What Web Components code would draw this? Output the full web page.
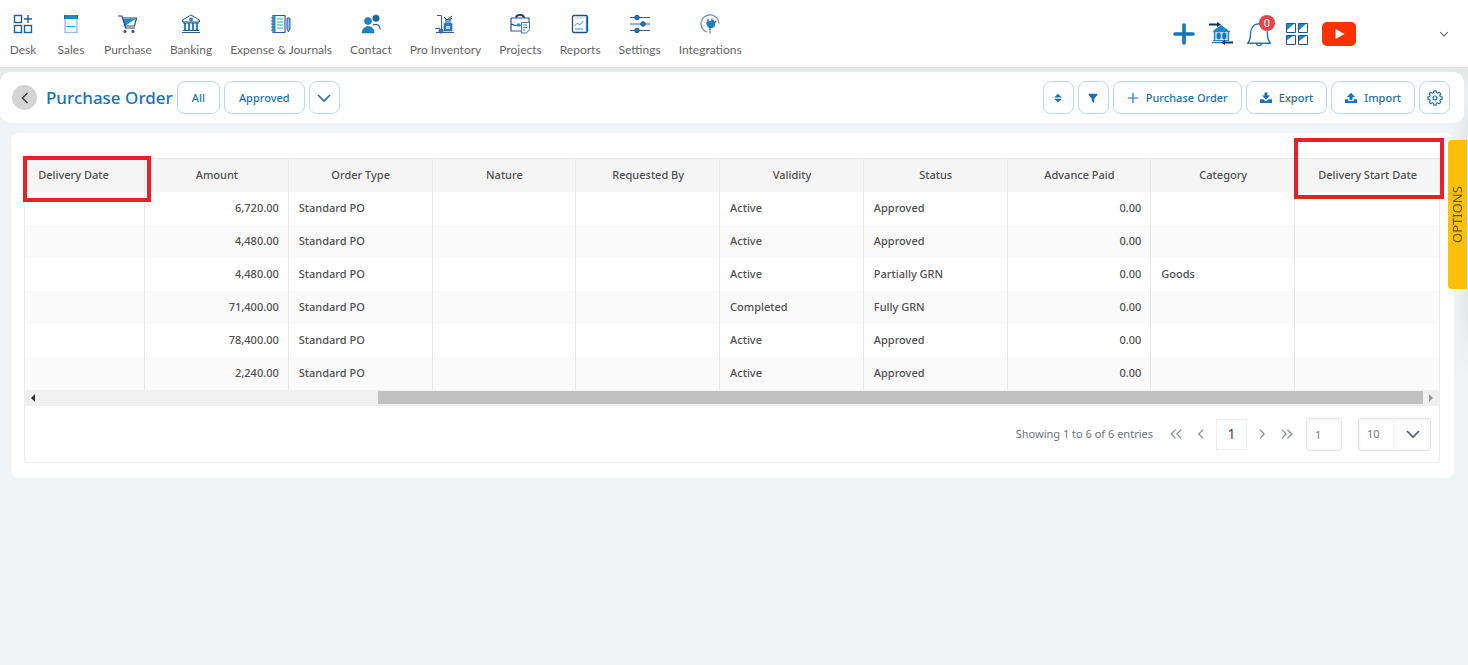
<!DOCTYPE html>
<html lang="en">
<head>
<meta charset="utf-8">
<title>Purchase Order</title>
<style>
html { min-height: 100%; background: #f0f4f7; }
body { margin: 0; font-family: "Noto Sans", "Open Sans", sans-serif; font-size: 11px; line-height: 16px; color: #505050; }
</style>
</head>
<body>
<po-app></po-app>
<script>
const ICONS = {
desk: `<g fill="none" stroke="#1f5d96" stroke-width="1.4"><rect x="1.5" y="1.5" width="7" height="7"/><rect x="1.5" y="11.5" width="7" height="7"/><rect x="11.5" y="11.5" width="7" height="7"/><path d="M15 1v8M11 5h8"/></g>`,
sales: `<path d="M4 3h12v16l-2-1-2 1-2-1-2 1-2-1-2 1z" fill="#f7fbff" stroke="#8aa3cc"/><path d="M3 1h14v4H3z" fill="#1c86c8"/><path d="M3.500 1v4M16.500 1v4" stroke="#2f5d9b"/><path d="M5 12.500h9" stroke="#2f9fdd"/><path d="M6 10h3" stroke="#b5dcf3"/>`,
purchase: `<path d="M18 4l-2 8H14L5 11 4 5z" fill="#fff"/><path d="M18 4.500L7 12 5 5z" fill="#1c8ed1"/><path d="M0 2h4l3.500 12H17M5 4h13.500l-2 8H7" fill="none" stroke="#2b4a80" stroke-width="1.200"/><circle cx="7" cy="17.500" r="1.500" fill="#23518f"/><circle cx="15" cy="17.500" r="1.500" fill="#23518f"/>`,
bank: `<path d="M10 1l8.500 5v2h-17V6z" fill="#fff" stroke="#27588f"/><circle cx="10" cy="5.500" r="2" fill="#1c8ed1"/><path d="M4 9v7M8 9v7M12 9v7M16 9v7" stroke="#2a86c6" stroke-width="2"/><path d="M2 9h16M2 16.500h16M1 18.500h18" stroke="#27588f"/>`,
journal: `<path d="M2 1.500h12v17H2z" fill="#fff" stroke="#2f5d9b" stroke-width="1.200"/><path d="M3.500 2v16" stroke="#1c8ed1" stroke-width="2"/><path d="M0 4h3M0 7h3M0 10h3M0 13h3M0 16h3" stroke="#2f5d9b"/><path d="M6 5h6M6 8h6M6 11h6M6 14h6" stroke="#36a2de"/><path d="M16 4h3v11l-1.500 3-1.500-3z" fill="#8fb9df" stroke="#2f5d9b"/>`,
contact: `<g fill="#1786c8" stroke="#1b5f9a" stroke-width=".5"><circle cx="7" cy="7" r="3.500"/><circle cx="15" cy="4.200" r="3.300" fill="#176aa5"/><path d="M1 19c0-8 12-9 12 0z"/></g><path d="M12 11c4-1.800 7 .5 7.300 4.500" fill="none" stroke="#2f5d9b" stroke-width="1.200"/>`,
inventory: `<path d="M2 1.500h4.500V17M1 18.500h18M0 14.500h5M11 18.500h8" fill="none" stroke="#3b5d94"/><path d="M9 9.500c0-1 8-1 8 0v7.500H9z" fill="#2c80c0" stroke="#27588f" stroke-width=".6"/><path d="M10 4.500l2 1 2-1 2 1v3h-6z" fill="#7d9cca"/><path d="M11 12h4v3h-4z" fill="#b7dbf2"/><path d="M9 3l3 3 5-4M14 6l3-2" fill="none" stroke="#23518f"/><circle cx="6" cy="17" r="2" fill="#2c80c0" stroke="#264e88"/>`,
projects: `<path d="M6 4c0-4 8-4 8 0" fill="none" stroke="#23406f" stroke-width="2"/><path d="M1 4h18v5M1 4v13h10M1 10c4 2 6 2 10 1" fill="none" stroke="#27588f" stroke-width="1.200"/><path d="M7 9.500h3v3H7z" fill="#1c8ed1"/><path d="M11.500 8.500h8v7l-3 3.500h-5z" fill="#f5faff" stroke="#4a76b2"/><path d="M13 11h4M13 13.500h4M13 16h2" stroke="#4b8fcb"/>`,
reports: `<rect x="2.500" y="1.500" width="15" height="17" rx="1.500" fill="#fff" stroke="#234b82" stroke-width="1.300"/><path d="M16.500 2.500v15" stroke="#1c8ed1" stroke-width="1.300"/><path d="M4.500 12l3-3 2 2 4-4M5 15h8" fill="none" stroke="#2492d4"/><path d="M5 4h7" stroke="#b2cfe8"/>`,
settings: `<path d="M0 3.500h20M0 10h20M0 16.500h20" stroke="#44618f" stroke-width="1.200"/><g fill="#1b7bba" stroke="#1d5894"><circle cx="7" cy="3.500" r="2.300"/><circle cx="13" cy="10" r="2.300"/><circle cx="7" cy="16.500" r="2.300"/></g>`,
integrations: `<path d="M7 18.300A9 9 0 1 1 19 9.500M10 19.500v-4" fill="none" stroke="#7189ae" stroke-width="1.200"/><path d="M6 8l8-2 1 3c.5 3-1 5-4 5s-4-1.500-4.500-4z" fill="#1c7fc1"/><path d="M8 8V5M12 7V4.500M10 13v3M14 9l2-2" stroke="#285d9b" stroke-width="1.200"/>`,
plus: `<path d="M12 3v18M3 12h18" stroke="#1177b8" stroke-width="3.600" stroke-linecap="round"/>`,
transfer: `<path d="M5 8l7-5 7 5v1H5z" fill="#1c86c8"/><path d="M4 9.500h17M3 20.500h10" stroke="#1c86c8" stroke-width="1.500"/><path d="M5 10.500h15v7H5z" fill="#a9d6ef"/><path d="M5.500 10v8M19.500 10v8" stroke="#2a86c6" stroke-width="1.400"/><ellipse cx="9.700" cy="14" rx="2" ry="3.400" fill="#1b75b7"/><ellipse cx="15.200" cy="14" rx="2" ry="3.400" fill="#1b75b7"/><path d="M4 18.500h16" stroke="#2a86c6"/><path d="M0 2.500h9M15 20.500h9" stroke="#102f68" stroke-width="2"/><path d="M8 0l4 2.500L8 5zM16 18l-4 2.500 4 2.500z" fill="#102f68"/>`,
bell: `<path d="M1.500 20.500h21c-2-2.500-2.700-5-2.700-9C19.800 6 16.500 2.500 12 2.500S4.200 6 4.200 11.500c0 4-.7 6.500-2.700 9z" fill="#fff" stroke="#1c79b8" stroke-width="1.300" stroke-linejoin="round"/><path d="M9.500 20.500c.5 3 4.500 3 5 0" fill="none" stroke="#1c79b8" stroke-width="1.300"/>`,
grid: `<path d="M1 1h10v10H1zM13 1h10v10H13zM1 13h10v10H1zM13 13h10v10H13z" fill="#fff"/><path d="M1.500 1.500h8l-8 7zM13.500 1.500h8l-8 7zM1.500 13.500h7l-7 5zM13.500 13.500h8l-8 6z" fill="#1c8bcc"/><path d="M1.500 1.500h9v9h-9zM13.500 1.500h9v9h-9zM1.500 13.500h9v9h-9zM13.500 13.500h9v9h-9z" fill="none" stroke="#2b4f87" stroke-width="1"/>`,
youtube: `<rect width="34" height="24" rx="5" fill="#fe3103"/><path d="M13.500 7v10l9-5z" fill="#fff"/>`,
chev: `<path d="M2 5l6 6 6-6" fill="none" stroke="currentColor" stroke-width="1.700"/>`,
left: `<path d="M10.500 3L5.500 8l5 5" fill="none" stroke="currentColor" stroke-width="1.500"/>`,
right: `<path d="M5.500 3l5 5-5 5" fill="none" stroke="currentColor" stroke-width="1.500"/>`,
first: `<path d="M7.500 3l-5 5 5 5M14 3L9 8l5 5" fill="none" stroke="currentColor" stroke-width="1.500"/>`,
last: `<path d="M2 3l5 5-5 5M8.500 3l5 5-5 5" fill="none" stroke="currentColor" stroke-width="1.500"/>`,
sort: `<path d="M2 7l6-6 6 6zM2 9h12l-6 6z" fill="currentColor"/>`,
filter: `<path d="M1 1h14v2L10 9v7l-4-3V9L1 3z" fill="currentColor"/>`,
add: `<path d="M8 1v14M1 8h14" stroke="currentColor" stroke-width="1.500"/>`,
export: `<path d="M6 .5h4v4h3.500L8 10 2.500 4.500H6zM0 9.500h4.500l2 2h3l2-2H16v5H0z" fill="currentColor"/>`,
import: `<path d="M6 10.500h4v-4h3.500L8 1 2.500 6.500H6zM0 9.500h4.500V12h7V9.500H16v5H0z" fill="currentColor"/>`,
gear: `<path d="M6.700 1h2.600l.4 2 1.300.6 1.800-1.100 1.800 1.800-1.200 1.800.5 1.200 2.100.4v2.600l-2.100.4-.5 1.300 1.200 1.700-1.800 1.800-1.800-1.200-1.300.6-.4 2.100H6.700l-.4-2.100-1.300-.6-1.700 1.200-1.800-1.800 1.100-1.700-.5-1.300L0 10.300V7.700l2.100-.4.5-1.200-1.100-1.800 1.800-1.800L5 3.600 6.300 3z" fill="none" stroke="currentColor" stroke-width="1.300" stroke-linejoin="round"/><circle cx="8" cy="8.900" r="2.200" fill="none" stroke="currentColor" stroke-width="1.300"/>`,
triL: `<path d="M10 4v8L6 8z" fill="currentColor"/>`,
triR: `<path d="M6 4v8l4-4z" fill="currentColor"/>`
};
const BOX = { plus: 24, transfer: 24, bell: 24, grid: 24 };
const define = (name, render) => customElements.define(name, class extends HTMLElement {
  constructor() { super(); this.attachShadow({ mode: 'open' }); }
  connectedCallback() { this.shadowRoot.innerHTML = render(this); }
});
const NAV = [['desk','Desk'],['sales','Sales'],['purchase','Purchase'],['bank','Banking'],['journal','Expense & Journals'],['contact','Contact'],['inventory','Pro Inventory'],['projects','Projects'],['reports','Reports'],['settings','Settings'],['integrations','Integrations']];

define('po-icon', el => {
  const n = el.getAttribute('name');
  const b = n === 'youtube' ? '0 0 34 24' : n === 'gear' ? '-1 0 18 18' : BOX[n] ? '0 0 24 24' : NAV.some(i => i[0] === n) ? '0 0 20 20' : '0 0 16 16';
  return `<style>:host{display:block;width:16px;height:16px;flex:none}svg{display:block;width:100%;height:100%}</style><svg viewBox="${b}" aria-hidden="true">${ICONS[n]}</svg>`;
});

define('po-nav-item', el => `<style>
:host{display:block;min-width:30px}
a{display:flex;flex-direction:column;align-items:center;gap:8px;color:#666;text-decoration:none;white-space:nowrap}
po-icon{width:20px;height:20px}
</style><a href="#"><po-icon name="${el.getAttribute('icon')}"></po-icon><span><slot></slot></span></a>`);

define('po-header', () => `<style>
:host{display:flex;justify-content:space-between;height:67px;background:#fff;border-bottom:1px solid #e2e5e6;box-sizing:content-box}
nav{display:flex;gap:18px;padding:14px 0 0 8px;font-family:Lato,sans-serif;font-size:12px}
.actions{display:flex;align-items:center;gap:13px;padding-right:19px}
button{position:relative;border:0;padding:0;background:none;color:#666}
.i{width:24px;height:24px}
.i[name=bell]{width:26px;height:26px}
.yt{width:34px;height:24px}
.me{margin-left:70px}
.me po-icon{width:10px;height:10px}
.badge{position:absolute;right:-3px;top:-6px;width:16px;height:16px;border-radius:50%;background:#e8434a;color:#fff;font:11px/16px "Noto Sans",sans-serif;text-align:center}
</style>
<nav>${NAV.map(([i, t]) => `<po-nav-item icon="${i}">${t.replace('&', '&amp;')}</po-nav-item>`).join('')}</nav>
<div class="actions">
<button aria-label="Add"><po-icon class="i" name="plus"></po-icon></button>
<button aria-label="Bank transfer"><po-icon class="i" name="transfer"></po-icon></button>
<button aria-label="Notifications"><po-icon class="i" name="bell"></po-icon><span class="badge">0</span></button>
<button aria-label="Apps"><po-icon class="i" name="grid"></po-icon></button>
<button aria-label="Videos"><po-icon class="yt" name="youtube"></po-icon></button>
<button class="me" aria-label="Account"><po-icon name="chev"></po-icon></button>
</div>`);

define('po-button', el => {
  const i = el.getAttribute('icon'), sq = el.hasAttribute('square');
  return `<style>
:host{display:block}
button{display:flex;align-items:center;justify-content:center;gap:7px;height:33px;box-sizing:border-box;border:1px solid #b9d9ea;border-radius:8px;background:#fff;color:#1a72b4;font:500 11px/16px "Noto Sans",sans-serif;padding:0 ${sq ? 0 : i ? 13 : 14}px;${sq ? 'width:31px;' : ''}white-space:nowrap}
po-icon{width:${sq ? 16 : 12}px;height:${sq ? 16 : 12}px}
po-icon[name=sort],po-icon[name=filter]{width:10px;height:10px}
</style><button aria-label="${el.getAttribute('label') || el.textContent}">${i ? `<po-icon name="${i}"></po-icon>` : ''}${sq ? '' : '<slot></slot>'}</button>`;
});

define('po-toolbar', () => `<style>
:host{display:flex;align-items:center;justify-content:space-between;height:51px;margin-right:4px;padding:0 14px 0 12px;background:#fff;border-radius:10px;box-shadow:0 0 3px #e3e7ea}
div{display:flex;align-items:center;gap:4px}
.back{display:grid;place-items:center;width:25px;height:25px;padding:0;border:0;border-radius:50%;background:#d4d4d4;color:#444}
h1{margin:0 0 0 5px;font:500 17px/24px "Noto Sans",sans-serif;color:#1a72b4;white-space:nowrap}
</style>
<div><button class="back" aria-label="Back"><po-icon name="left"></po-icon></button><h1>Purchase Order</h1>
<po-button>All</po-button><po-button>Approved</po-button><po-button icon="chev" square label="More filters"></po-button></div>
<div><po-button icon="sort" square label="Sort"></po-button><po-button icon="filter" square label="Filter"></po-button><po-button icon="add">Purchase Order</po-button><po-button icon="export">Export</po-button><po-button icon="import">Import</po-button><po-button icon="gear" square label="Configure"></po-button></div>`);

const COLS = ['Delivery Date','Amount','Order Type','Nature','Requested By','Validity','Status','Advance Paid','Category','Delivery Start Date'];
const ROWS = [['6,720.00','Active','Approved',''],['4,480.00','Active','Approved',''],['4,480.00','Active','Partially GRN','Goods'],['71,400.00','Completed','Fully GRN',''],['78,400.00','Active','Approved',''],['2,240.00','Active','Approved','']];
define('po-table', () => `<style>
:host{display:block}
table{width:100%;table-layout:fixed;border-collapse:separate;border-spacing:0}
th,td{box-sizing:border-box;height:33px;padding:0 9px 2px 10px;border-right:1px solid #e8e8e8;white-space:nowrap;text-align:left;font-weight:500}
th{position:relative;height:34px;background:#f5f5f5;border-top:1px solid #e6e6e6;text-align:center}
th:first-child{width:120px;padding-right:32px}
th:last-child,td:last-child{border-right:0}
td.n{text-align:right}
tr:nth-child(even) td{background:#fafafa}
.mark{position:absolute;box-sizing:border-box;border:4px solid #e8202a;pointer-events:none;z-index:1}
.a{inset:-3px -7px -10px -2px}
.b{inset:-21px -5px -7px -1px}
</style>
<table><thead><tr>${COLS.map((c, i) => `<th scope="col">${c}${i === 0 ? '<span class="mark a"></span>' : i === 9 ? '<span class="mark b"></span>' : ''}</th>`).join('')}</tr></thead>
<tbody>${ROWS.map(r => `<tr><td></td><td class="n">${r[0]}</td><td>Standard PO</td><td></td><td></td><td>${r[1]}</td><td>${r[2]}</td><td class="n">0.00</td><td>${r[3]}</td><td></td></tr>`).join('')}</tbody></table>`);

define('po-scrollbar', () => `<style>
:host{display:grid;grid-template-columns:16px 1fr 16px;align-items:center;height:16px;background:#f0f0f0;color:#333}
.track{display:grid;grid-template-columns:337fr 1045fr;height:14px}
.thumb{grid-column:2;height:13px;background:#c1c1c1}
po-icon:last-child{color:#999}
</style><po-icon name="triL"></po-icon><div class="track"><div class="thumb"></div></div><po-icon name="triR"></po-icon>`);

define('po-pager', () => `<style>
:host{display:flex;align-items:center;justify-content:flex-end;height:56px;padding-right:8px;color:#6c757d}
button{display:grid;place-items:center;border:0;padding:0;background:none;color:#8a9097;width:20px;height:20px}
po-icon{width:14px;height:14px}
.nav{display:flex;align-items:center;gap:5px;margin-left:13px}
.cur{width:31px;height:31px;border:1px solid #eee;color:#444;font:14px/16px "Noto Sans",sans-serif}
input,select{box-sizing:border-box;height:33px;border:1px solid #e2e5e8;border-radius:3px;background:#fff;color:#777;font:11px/16px "Noto Sans",sans-serif;box-shadow:inset 0 0 3px #eee}
input{width:36px;margin-left:9px;padding:0 8px}
.size{display:grid;width:73px;margin-left:16px}
.size>*{grid-area:1/1}
select{appearance:none;width:100%;padding:0 8px}
.arrow{display:grid;place-items:center;justify-self:end;width:37px;border-left:1px solid #f1f1f1;pointer-events:none;color:#555f69}
.arrow po-icon{width:16px;height:16px}
</style>
<span>Showing 1 to 6 of 6 entries</span>
<div class="nav"><button aria-label="First page"><po-icon name="first"></po-icon></button><button aria-label="Previous page"><po-icon name="left"></po-icon></button><button class="cur">1</button><button aria-label="Next page"><po-icon name="right"></po-icon></button><button aria-label="Last page"><po-icon name="last"></po-icon></button></div>
<input aria-label="Go to page" value="1">
<div class="size"><select aria-label="Rows per page"><option>10</option><option>25</option><option>50</option></select><span class="arrow"><po-icon name="chev"></po-icon></span></div>`);

define('po-options-tab', () => `<style>
:host{display:block;position:absolute;right:0;top:68px;height:304px;width:14px;background:linear-gradient(90deg,#e2e7ea00,#e2e7ea);mask-image:linear-gradient(#0000,#000 20%,#000 80%,#0000)}
</style>`);

define('po-options-button', () => `<style>
:host{display:block;position:absolute;right:1px;top:140px}
button{width:19px;height:149px;padding:0;border:0;border-radius:0 4px 4px 0;background:#fcc009;color:#5d5227;font:13px/19px "Noto Sans",sans-serif;writing-mode:vertical-rl;transform:rotate(180deg)}
</style><button>OPTIONS</button>`);

define('po-app', () => `<style>
:host{display:block;position:relative}
.band{padding-top:4px;background:linear-gradient(#e5e8e8 6px,#f0f4f7 24px)}
po-toolbar,main{position:relative;z-index:1}
po-options-button{z-index:2}
main{margin:10px 14px 0 11px;padding:25px 14px 15px 13px;background:#fff;border-radius:8px}
.frame{border:1px solid #ececec;border-top:0;border-radius:0 0 4px 4px}
</style>
<po-header></po-header><div class="band"><po-toolbar></po-toolbar></div>
<main><div class="frame"><po-table></po-table><po-scrollbar></po-scrollbar><po-pager></po-pager></div></main>
<po-options-tab></po-options-tab><po-options-button></po-options-button>`);
</script>
</body>
</html>
